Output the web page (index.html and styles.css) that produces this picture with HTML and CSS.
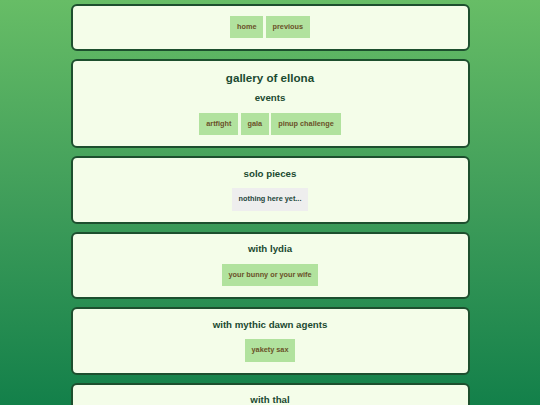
FILE: index.html
```html
<!DOCTYPE html>
<html>
<head>
<meta charset="utf-8">
<link rel="stylesheet" href="styles.css">
</head>
<body>
<main class="page">
  <section class="card">
    <div class="links">
      <a class="btn">home</a>
      <a class="btn">previous</a>
    </div>
  </section>
  <section class="card">
    <h1 class="title">gallery of ellona</h1>
    <h2 class="sub">events</h2>
    <div class="links">
      <a class="btn">artfight</a>
      <a class="btn">gala</a>
      <a class="btn">pinup challenge</a>
    </div>
  </section>
  <section class="card">
    <h2 class="sub">solo pieces</h2>
    <div class="links">
      <span class="btn empty">nothing here yet...</span>
    </div>
  </section>
  <section class="card">
    <h2 class="sub">with lydia</h2>
    <div class="links">
      <a class="btn">your bunny or your wife</a>
    </div>
  </section>
  <section class="card">
    <h2 class="sub">with mythic dawn agents</h2>
    <div class="links">
      <a class="btn">yakety sax</a>
    </div>
  </section>
  <section class="card">
    <h2 class="sub">with thal</h2>
    <div class="links">
      <a class="btn">placeholder</a>
    </div>
  </section>
</main>
</body>
</html>
```
FILE: styles.css
```css
html, body {
  margin: 0;
  padding: 0;
}
body {
  background: linear-gradient(180deg, #67bd66 0%, #3f9d5a 50%, #13804a 100%);
  background-attachment: fixed;
  min-height: 100vh;
  font-family: "Liberation Sans", Arial, sans-serif;
  overflow: hidden;
}
.page {
  width: 399px;
  margin: 0 auto;
  padding-top: 4.3px;
  display: flex;
  flex-direction: column;
  gap: 8.3px;
}
.card {
  background: #f4fde9;
  border: 2px solid #1d4f2e;
  border-radius: 6px;
  padding: 9.5px 10px 11px;
  display: flex;
  flex-direction: column;
  align-items: center;
}
.title {
  margin: 0 0 7px;
  font-size: 11.6px;
  line-height: 14.5px;
  font-weight: bold;
  color: #1b4a30;
}
.sub {
  margin: 0 0 8.3px;
  font-size: 9.7px;
  line-height: 12px;
  font-weight: bold;
  color: #1b4a30;
}
.links {
  display: flex;
  justify-content: center;
  gap: 2.3px;
}
.btn {
  display: block;
  background: #b1e29e;
  color: #6a5128;
  font-size: 7.3px;
  font-weight: bold;
  height: 22.4px;
  line-height: 22.4px;
  padding: 0 6.9px;
  text-decoration: none;
}
.btn.empty {
  background: #eeeeee;
  color: #24463a;
}
```
